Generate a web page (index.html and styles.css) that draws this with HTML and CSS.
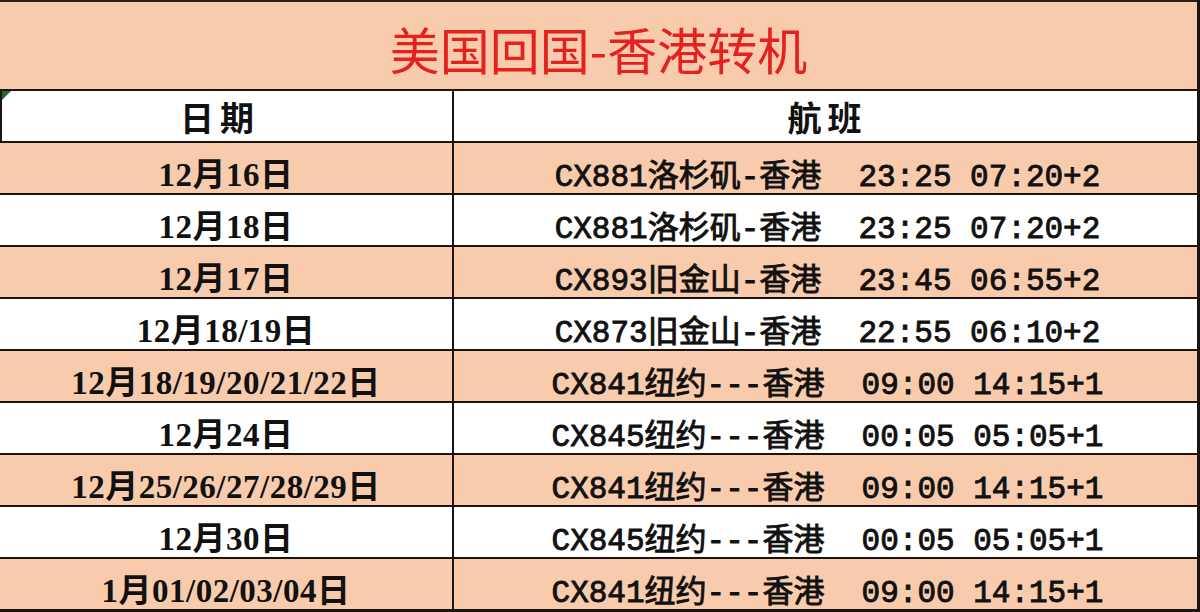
FILE: index.html
```html
<!DOCTYPE html>
<html lang="zh-CN">
<head>
<meta charset="utf-8">
<title>美国回国-香港转机</title>
<link rel="stylesheet" href="styles.css">
</head>
<body>
<div class="sheet">
  <div class="title">美国回国-香港转机</div>
  <div class="row head">
    <div class="cell date hd">日期<span class="flag"></span></div>
    <div class="cell flight hd">航班</div>
  </div>
  <div class="row peach"><div class="cell date">12月16日</div><div class="cell flight">CX881洛杉矶-香港  23:25 07:20+2</div></div>
  <div class="row"><div class="cell date">12月18日</div><div class="cell flight">CX881洛杉矶-香港  23:25 07:20+2</div></div>
  <div class="row peach"><div class="cell date">12月17日</div><div class="cell flight">CX893旧金山-香港  23:45 06:55+2</div></div>
  <div class="row"><div class="cell date">12月18/19日</div><div class="cell flight">CX873旧金山-香港  22:55 06:10+2</div></div>
  <div class="row peach"><div class="cell date">12月18/19/20/21/22日</div><div class="cell flight">CX841纽约---香港  09:00 14:15+1</div></div>
  <div class="row"><div class="cell date">12月24日</div><div class="cell flight">CX845纽约---香港  00:05 05:05+1</div></div>
  <div class="row peach"><div class="cell date">12月25/26/27/28/29日</div><div class="cell flight">CX841纽约---香港  09:00 14:15+1</div></div>
  <div class="row"><div class="cell date">12月30日</div><div class="cell flight">CX845纽约---香港  00:05 05:05+1</div></div>
  <div class="row peach last"><div class="cell date">1月01/02/03/04日</div><div class="cell flight">CX841纽约---香港  09:00 14:15+1</div></div>
</div>
</body>
</html>
```

FILE: styles.css
```css
html, body {
  margin: 0;
  padding: 0;
  background: #ffffff;
}

.sheet {
  width: 1200px;
  height: 612px;
  display: flex;
  flex-direction: column;
  box-sizing: border-box;
  border-right: 3px solid #1c1414;
  overflow: hidden;
}

.title {
  height: 88px;
  box-sizing: border-box;
  border-top: 2px solid #2a1f1a;
  border-bottom: 2px solid #1c1414;
  background: #f8cbad;
  color: #e3211f;
  font-family: "Noto Sans CJK SC", sans-serif;
  font-size: 50px;
  display: flex;
  align-items: center;
  justify-content: center;
  padding-top: 4px;
  line-height: 1;
  flex: 0 0 91px;
}

.row {
  display: grid;
  grid-template-columns: 454px 1fr;
  height: 52px;
  box-sizing: border-box;
  border-bottom: 2px solid #1c1414;
  background: #ffffff;
}

.row.peach {
  background: #f8cbad;
}

.row.last {
  height: 53px;
  border-bottom-width: 3px;
}

.row.head {
  border-left: 2px solid #1c1414;
  grid-template-columns: 452px 1fr;
}

.cell {
  display: flex;
  align-items: center;
  justify-content: center;
  white-space: pre;
  color: #111111;
  padding-top: 5px;
  box-sizing: border-box;
}

.date {
  border-right: 2px solid #1c1414;
  font-family: "Liberation Serif", "Noto Sans CJK SC", serif;
  font-weight: 700;
  font-size: 33px;
  letter-spacing: 0.5px;
  position: relative;
}

.flight {
  font-family: "Liberation Mono", "Noto Sans CJK SC", monospace;
  font-weight: 400;
  font-size: 31px;
  -webkit-text-stroke: 0.9px #111111;
  padding-left: 4px;
}

.hd {
  font-family: "Noto Sans CJK SC", sans-serif;
  font-weight: 700;
  font-size: 34px;
  letter-spacing: 6px;
  padding-top: 0;
  -webkit-text-stroke: 0;
}

.date.hd {
  padding-right: 14px;
}

.flag {
  position: absolute;
  left: 0;
  top: 0;
  width: 0;
  height: 0;
  border-top: 9px solid #1f6b2c;
  border-right: 9px solid transparent;
}
```
